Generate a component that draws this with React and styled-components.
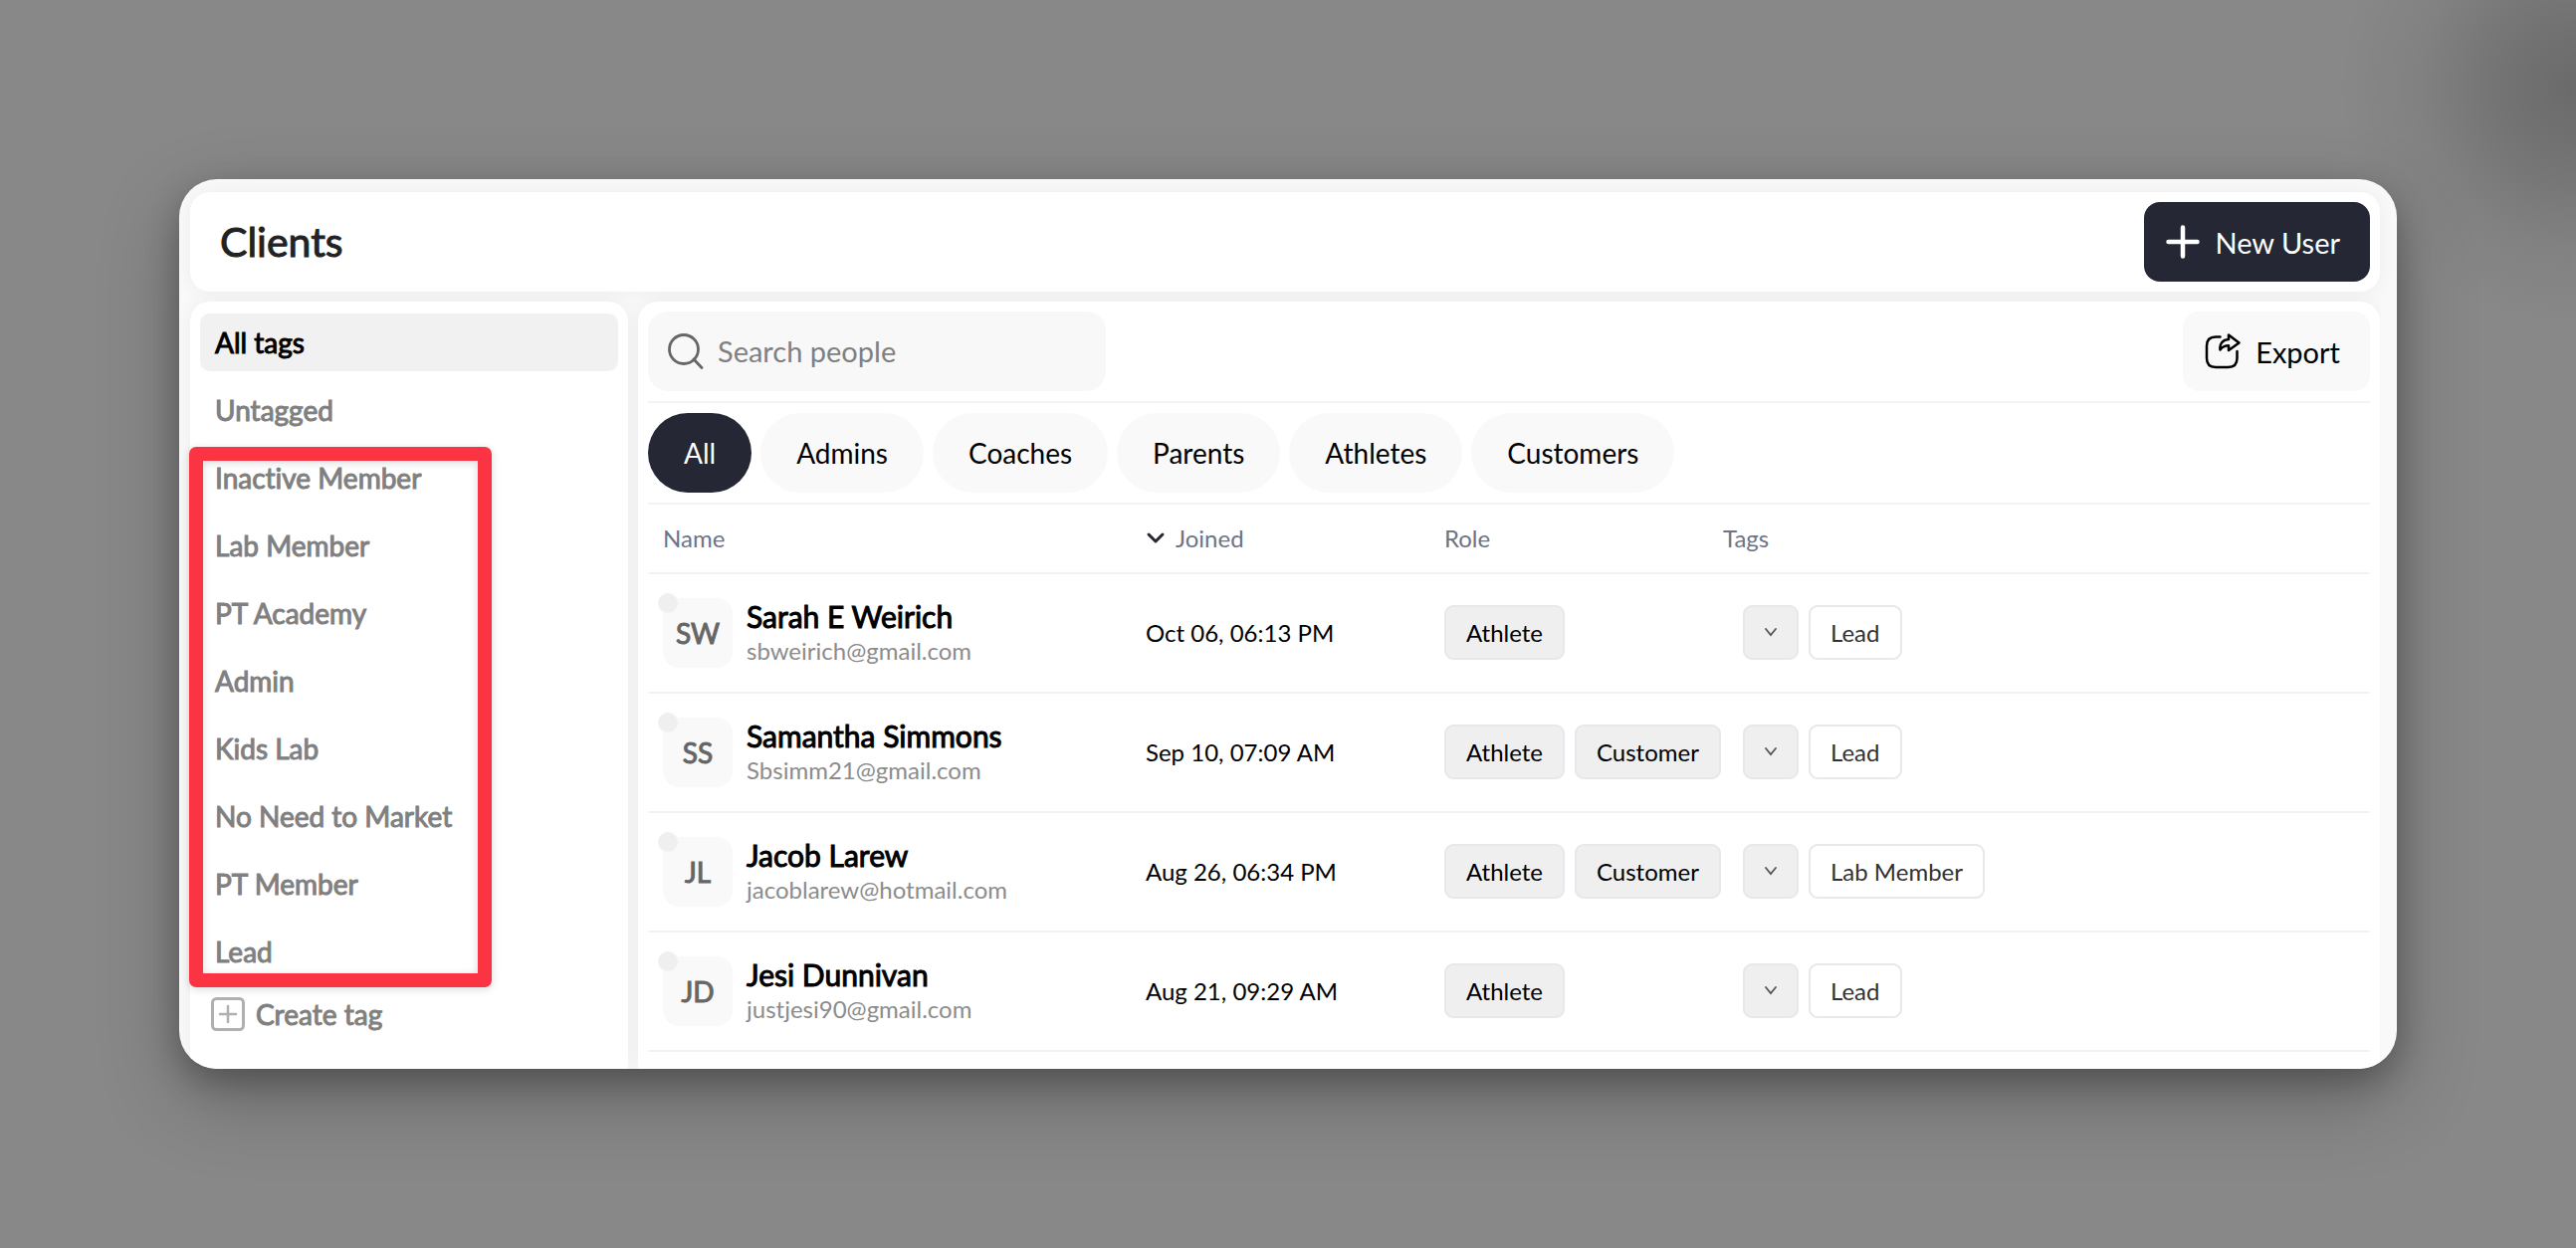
import { useState } from "react";
import styled, { createGlobalStyle, css } from "styled-components";

const tags = [
  "All tags",
  "Untagged",
  "Inactive Member",
  "Lab Member",
  "PT Academy",
  "Admin",
  "Kids Lab",
  "No Need to Market",
  "PT Member",
  "Lead",
];

const roles = ["All", "Admins", "Coaches", "Parents", "Athletes", "Customers"];

const clients = [
  {
    initials: "SW",
    name: "Sarah E Weirich",
    email: "sbweirich@gmail.com",
    joined: "Oct 06, 06:13 PM",
    roles: ["Athlete"],
    tags: ["Lead"],
  },
  {
    initials: "SS",
    name: "Samantha Simmons",
    email: "Sbsimm21@gmail.com",
    joined: "Sep 10, 07:09 AM",
    roles: ["Athlete", "Customer"],
    tags: ["Lead"],
  },
  {
    initials: "JL",
    name: "Jacob Larew",
    email: "jacoblarew@hotmail.com",
    joined: "Aug 26, 06:34 PM",
    roles: ["Athlete", "Customer"],
    tags: ["Lab Member"],
  },
  {
    initials: "JD",
    name: "Jesi Dunnivan",
    email: "justjesi90@gmail.com",
    joined: "Aug 21, 09:29 AM",
    roles: ["Athlete"],
    tags: ["Lead"],
  },
];

export default function App() {
  const [activeTag, setActiveTag] = useState("All tags");
  const [activeRole, setActiveRole] = useState("All");
  const [search, setSearch] = useState("");

  return (
    <>
      <GlobalStyle />
      <Page>
        <Window>
          <Header>
            <h1>Clients</h1>
            <ActionButton $dark>
              <PlusIcon />
              New User
            </ActionButton>
          </Header>
          <Content>
            <Sidebar>
              <TagList>
                {tags.map((tag) => (
                  <TagButton
                    key={tag}
                    $active={tag === activeTag}
                    onClick={() => setActiveTag(tag)}
                  >
                    {tag}
                  </TagButton>
                ))}
                <Highlight />
              </TagList>
              <CreateTag>
                <AddBoxIcon />
                Create tag
              </CreateTag>
            </Sidebar>
            <Main>
              <Toolbar>
                <SearchBox>
                  <SearchIcon />
                  <input
                    type="text"
                    aria-label="Search people"
                    placeholder="Search people"
                    value={search}
                    onChange={(e) => setSearch(e.target.value)}
                  />
                </SearchBox>
                <ActionButton>
                  <ExportIcon />
                  Export
                </ActionButton>
              </Toolbar>
              <RoleFilter>
                {roles.map((role) => (
                  <RoleButton
                    key={role}
                    $active={role === activeRole}
                    onClick={() => setActiveRole(role)}
                  >
                    {role}
                  </RoleButton>
                ))}
              </RoleFilter>
              <Table>
                <colgroup>
                  <Col $width={485} />
                  <Col $width={300} />
                  <Col $width={280} />
                  <col />
                </colgroup>
                <thead>
                  <tr>
                    <th>Name</th>
                    <th>
                      <SortLabel>
                        <SortIcon />
                        Joined
                      </SortLabel>
                    </th>
                    <th>Role</th>
                    <th>Tags</th>
                  </tr>
                </thead>
                <tbody>
                  {clients.map((client) => (
                    <tr key={client.email}>
                      <PersonCell>
                        <Person>
                          <Avatar>{client.initials}</Avatar>
                          <div>
                            <Name>{client.name}</Name>
                            <Email>{client.email}</Email>
                          </div>
                        </Person>
                      </PersonCell>
                      <td>{client.joined}</td>
                      <td>
                        <Chips>
                          {client.roles.map((role) => (
                            <Chip key={role}>{role}</Chip>
                          ))}
                        </Chips>
                      </td>
                      <td>
                        <Chips $indent>
                          <TagMenu aria-label={`Tags of ${client.name}`}>
                            <MenuIcon />
                          </TagMenu>
                          {client.tags.map((tag) => (
                            <Chip key={tag} $outline>
                              {tag}
                            </Chip>
                          ))}
                        </Chips>
                      </td>
                    </tr>
                  ))}
                </tbody>
              </Table>
            </Main>
          </Content>
        </Window>
      </Page>
    </>
  );
}

function PlusIcon() {
  return (
    <svg width="34" height="34" viewBox="0 0 34 34" aria-hidden="true">
      <path
        d="M17 2.5v29M2.5 17h29"
        stroke="#fff"
        strokeWidth="4.5"
        strokeLinecap="round"
      />
    </svg>
  );
}

function AddBoxIcon() {
  return (
    <svg width="34" height="34" viewBox="0 0 34 34" fill="none" aria-hidden="true">
      <rect x="1.5" y="1.5" width="31" height="31" rx="4" stroke="#b0b0b0" strokeWidth="3" />
      <path d="M17 9v16M9 17h16" stroke="#b0b0b0" strokeWidth="2.5" strokeLinecap="round" />
    </svg>
  );
}

function SearchIcon() {
  return (
    <svg width="36" height="36" viewBox="0 0 36 36" fill="none" aria-hidden="true">
      <circle cx="16" cy="16" r="14.5" stroke="#666" strokeWidth="2.8" />
      <path d="M26 26l8 8.5" stroke="#666" strokeWidth="2.8" strokeLinecap="round" />
    </svg>
  );
}

function ExportIcon() {
  return (
    <svg
      width="36"
      height="36"
      viewBox="0 0 36 36"
      fill="none"
      stroke="#000"
      strokeWidth="2.5"
      strokeLinecap="round"
      strokeLinejoin="round"
      aria-hidden="true"
    >
      <path d="M15.5 3.5H11C5 3.5 2 6.5 2 12.5V25c0 6 3 9 9 9h12.5c6 0 9-3 9-9v-7" />
      <path d="M24 1.5V6c-6 .5-9.500 4.500-8.500 10.500 2-3 4.500-4.200 8.500-4.200V17l10.500-7.500z" />
    </svg>
  );
}

function SortIcon() {
  return (
    <svg width="20" height="20" viewBox="0 0 20 20" fill="none" aria-hidden="true">
      <path
        d="M3 7l7 7 7-7"
        stroke="#252734"
        strokeWidth="3"
        strokeLinecap="round"
        strokeLinejoin="round"
      />
    </svg>
  );
}

function MenuIcon() {
  return (
    <svg width="12" height="12" viewBox="0 0 12 12" fill="none" aria-hidden="true">
      <path d="M1 3l5 6 5-6" stroke="#555" strokeWidth="1.8" strokeLinecap="round" />
    </svg>
  );
}

const GlobalStyle = createGlobalStyle`
  * {
    box-sizing: border-box;
  }
  body {
    margin: 0;
    font-family: Lato, sans-serif;
    font-size: 24px;
    font-variant-ligatures: none;
    color: #000;
    -webkit-font-smoothing: antialiased;
  }
  button,
  input {
    font-family: inherit;
    font-variant-ligatures: inherit;
    border: none;
  }
  button {
    cursor: pointer;
  }
  svg {
    flex: none;
    display: block;
  }
`;

// regular weight, thickened evenly
const heavy = css`
  font-weight: 400;
  -webkit-text-stroke: 1px currentColor;
`;

const panel = css`
  background-color: #fff;
  box-shadow: 0 0 20px rgba(0, 0, 0, 0.05);
`;

const Page = styled.div`
  display: flex;
  min-height: 100vh;
  padding: 180px;
  background: radial-gradient(
      circle at 100% 7%,
      rgba(0, 0, 0, 0.22) 0,
      rgba(0, 0, 0, 0.15) 80px,
      rgba(0, 0, 0, 0.05) 160px,
      rgba(0, 0, 0, 0) 240px
    ),
    #888;
`;

const Window = styled.div`
  flex: 1;
  min-width: 0;
  display: flex;
  flex-direction: column;
  gap: 10px;
  padding: 13px 17px 0 11px;
  overflow: hidden;
  background-color: #f9f9f9;
  border-radius: 38px;
  box-shadow: 0 12px 32px rgba(0, 0, 0, 0.25),
    0 30px 80px rgba(0, 0, 0, 0.25);
`;

const Header = styled.header`
  ${panel}
  display: flex;
  align-items: center;
  justify-content: space-between;
  padding: 10px 10px 10px 30px;
  border-radius: 20px;

  h1 {
    ${heavy}
    margin: 0;
    font-size: 41px;
    line-height: 48px;
    color: #222;
  }
`;

const ActionButton = styled.button`
  display: flex;
  align-items: center;
  gap: 15px;
  height: 80px;
  padding: 0 30px 0 22px;
  border-radius: 16px;
  font-size: 29px;
  color: ${({ $dark }) => ($dark ? "#fff" : "#000")};
  background-color: ${({ $dark }) => ($dark ? "#252734" : "#f9f9f9")};
`;

const Content = styled.div`
  flex: 1;
  display: flex;
  gap: 10px;
`;

const Sidebar = styled.aside`
  ${panel}
  flex: none;
  width: 440px;
  padding: 12px 10px;
  border-radius: 20px 20px 0 0;
`;

const TagList = styled.div`
  position: relative;
  display: flex;
  flex-direction: column;
  gap: 10px;
`;

const TagButton = styled.button`
  ${heavy}
  height: 58px;
  padding: 0 15px;
  border-radius: 10px;
  text-align: left;
  font-size: 28px;
  color: ${({ $active }) => ($active ? "#000" : "#808080")};
  background-color: ${({ $active }) => ($active ? "#f1f1f1" : "transparent")};
`;

/* frame over the custom tags */
const Highlight = styled.div`
  position: absolute;
  top: 134px;
  bottom: -7px;
  left: -11px;
  width: 304px;
  border: 14px solid #fa3442;
  border-radius: 7px;
  box-shadow: 0 2px 8px rgba(0, 0, 0, 0.15),
    inset 0 2px 8px rgba(0, 0, 0, 0.15);
  pointer-events: none;
`;

const CreateTag = styled.button`
  ${heavy}
  display: flex;
  align-items: center;
  gap: 11px;
  height: 68px;
  padding: 0 11px;
  font-size: 28px;
  color: #808080;
  background-color: transparent;
`;

const Main = styled.main`
  ${panel}
  flex: 1;
  min-width: 0;
  padding: 10px 10px 0;
  border-radius: 20px 20px 0 0;
  clip-path: inset(-10px 0 0 -10px);
`;

const Toolbar = styled.div`
  display: flex;
  justify-content: space-between;
  padding-bottom: 10px;
  border-bottom: 2px solid #f3f3f3;
`;

const SearchBox = styled.label`
  display: flex;
  align-items: center;
  gap: 14px;
  width: 460px;
  height: 80px;
  padding: 0 20px;
  border-radius: 20px;
  background-color: #f8f8f8;

  input {
    flex: 1;
    min-width: 0;
    padding: 0 0 2px;
    font-size: 29px;
    color: #000;
    background-color: transparent;
    outline: none;
  }
  input::placeholder {
    color: #808080;
  }
`;

const RoleFilter = styled.div`
  display: flex;
  gap: 9px;
  padding: 10px 0;
  border-bottom: 2px solid #f3f3f3;
`;

const RoleButton = styled.button`
  height: 80px;
  padding: 0 36px;
  border-radius: 40px;
  font-size: 28px;
  color: ${({ $active }) => ($active ? "#fff" : "#000")};
  background-color: ${({ $active }) => ($active ? "#252734" : "#f9f9f9")};
`;

const Table = styled.table`
  width: 100%;
  table-layout: fixed;
  border-spacing: 0;

  th,
  td {
    padding: 0 0 2px 15px;
    text-align: left;
    border-bottom: 2px solid #f3f3f3;
  }
  th {
    height: 70px;
    font-weight: 400;
    color: #6c7486;
  }
  td {
    height: 120px;
  }
`;

const Col = styled.col`
  width: ${({ $width }) => $width}px;
`;

const SortLabel = styled.span`
  display: flex;
  align-items: center;
  gap: 10px;
`;

const PersonCell = styled.td`
  && {
    padding-bottom: 0;
  }
`;

const Person = styled.div`
  display: flex;
  align-items: center;
  gap: 14px;
`;

const Avatar = styled.div`
  ${heavy}
  position: relative;
  display: flex;
  align-items: center;
  justify-content: center;
  width: 70px;
  height: 70px;
  border-radius: 16px;
  font-size: 28px;
  color: #666;
  background-color: #f9f9f9;

  &::before {
    content: "";
    position: absolute;
    top: -5px;
    left: -5px;
    width: 20px;
    height: 20px;
    border-radius: 50%;
    background-color: #efefef;
  }
`;

const Name = styled.div`
  ${heavy}
  font-size: 30px;
  line-height: 36px;
`;

const Email = styled.div`
  line-height: 34px;
  color: #8c8c8c;
`;

const Chips = styled.div`
  display: flex;
  gap: 10px;
  margin-left: ${({ $indent }) => ($indent ? "20px" : "0")};
`;

const chipBox = css`
  display: flex;
  align-items: center;
  height: 55px;
  padding: 0 20px;
  border: 2px solid #e7e7ec;
  border-radius: 9px;
  background-color: #efefef;
`;

const Chip = styled.span`
  ${chipBox}
  white-space: nowrap;
  color: ${({ $outline }) => ($outline ? "#333" : "#000")};
  background-color: ${({ $outline }) => ($outline ? "#fff" : "#efefef")};
`;

const TagMenu = styled.button`
  ${chipBox}
`;
